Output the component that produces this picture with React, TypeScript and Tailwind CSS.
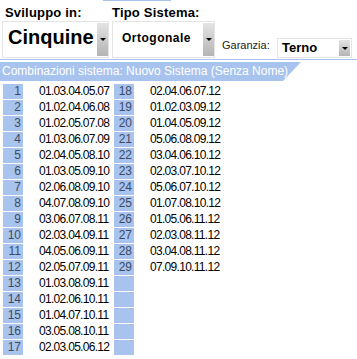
import React from "react";

const combos = [
  "01.03.04.05.07",
  "01.02.04.06.08",
  "01.02.05.07.08",
  "01.03.06.07.09",
  "02.04.05.08.10",
  "01.03.05.09.10",
  "02.06.08.09.10",
  "04.07.08.09.10",
  "03.06.07.08.11",
  "02.03.04.09.11",
  "04.05.06.09.11",
  "02.05.07.09.11",
  "01.03.08.09.11",
  "01.02.06.10.11",
  "01.04.07.10.11",
  "03.05.08.10.11",
  "02.03.05.06.12",
  "02.04.06.07.12",
  "01.02.03.09.12",
  "01.04.05.09.12",
  "05.06.08.09.12",
  "03.04.06.10.12",
  "02.03.07.10.12",
  "05.06.07.10.12",
  "01.07.08.10.12",
  "01.05.06.11.12",
  "02.03.08.11.12",
  "03.04.08.11.12",
  "07.09.10.11.12",
];

function DropButton({ className = "" }: { className?: string }) {
  return (
    <div
      className={`w-[11px] flex items-center justify-center bg-gradient-to-b from-[#e4e4e4] to-[#b4b4b4] ${className}`}
    >
      <div className="w-0 h-0 border-l-[3px] border-r-[3px] border-t-[3px] border-l-transparent border-r-transparent border-t-black" />
    </div>
  );
}

function Row({ n, text }: { n: number | null; text: string }) {
  return (
    <div className="flex h-[16px] pb-[1px]">
      <div className="w-[20px] bg-[#a8c4ee] text-right pr-[2px] text-[12px] leading-[15px] text-[#3c4a64]">
        {n ?? ""}
      </div>
      <div className="pl-[16px] text-[12px] leading-[15px] tracking-[-0.7px] whitespace-nowrap text-black">
        {text}
      </div>
    </div>
  );
}

export default function App() {
  const col1 = combos.slice(0, 17).map((t, i) => ({ n: i + 1, t }));
  const col2 = Array.from({ length: 17 }, (_, i) =>
    i < 12 ? { n: i + 18, t: combos[i + 17] } : { n: null, t: "" }
  );

  return (
    <div
      className="relative w-[357px] h-[359px] bg-white overflow-hidden"
      style={{ fontFamily: '"Liberation Sans", Arial, sans-serif' }}
    >
      <div className="absolute left-[103px] top-0 w-[68px] h-[1px] bg-[#a8c4ee]" />

      {/* top controls */}
      <div className="flex items-end h-[58px] pt-[2px]">
        <div className="w-[112px] pl-[2px] flex flex-col">
          <div className="pl-[3px] text-[13px] font-bold leading-[15px] tracking-[0.2px]">
            Sviluppo in:
          </div>
          <div className="mt-[1px] w-[107px] h-[37px] border border-[#e4e4e4] flex">
            <div className="flex-1 pl-[5px] text-[20px] font-bold leading-[31px]">
              Cinquine
            </div>
            <DropButton className="my-[1px]" />
          </div>
        </div>
        <div className="w-[106px] flex flex-col">
          <div className="text-[13px] font-bold leading-[15px] tracking-[0.2px]">
            Tipo Sistema:
          </div>
          <div className="mt-[1px] w-[103px] h-[37px] border border-[#e4e4e4] flex">
            <div className="flex-1 pl-[9px] text-[12px] font-bold leading-[32px] tracking-[0.5px]">
              Ortogonale
            </div>
            <DropButton className="my-[1px]" />
          </div>
        </div>
        <div className="flex items-end">
          <div className="w-[59px] pl-[4px] pb-[6px] text-[11px] leading-[13px] text-[#222]">
            Garanzia:
          </div>
          <div className="w-[75px] h-[20px] border border-[#e4e4e4] flex">
            <div className="flex-1 pl-[4px] text-[13px] font-bold leading-[18px]">
              Terno
            </div>
            <DropButton className="my-[1px] mr-[1px]" />
          </div>
        </div>
      </div>

      {/* section header */}
      <div className="mt-[1px] h-[1px] bg-[#a8c4ee]" />
      <div
        className="mt-[2px] w-[301px] h-[19px] bg-[#a8c4ee] pl-[2px] text-[12px] leading-[19px] whitespace-nowrap text-white"
        style={{ clipPath: "polygon(0 0, 100% 0, calc(100% - 18px) 100%, 0 100%)" }}
      >
        Combinazioni sistema: Nuovo Sistema (Senza Nome)
      </div>

      {/* combinations */}
      <div className="mt-[3px] flex pl-[3px]">
        <div className="w-[111px] flex flex-col">
          {col1.map((r) => (
            <Row key={r.n} n={r.n} text={r.t} />
          ))}
        </div>
        <div className="flex flex-col">
          {col2.map((r, i) => (
            <Row key={i} n={r.n} text={r.t} />
          ))}
        </div>
      </div>
    </div>
  );
}
